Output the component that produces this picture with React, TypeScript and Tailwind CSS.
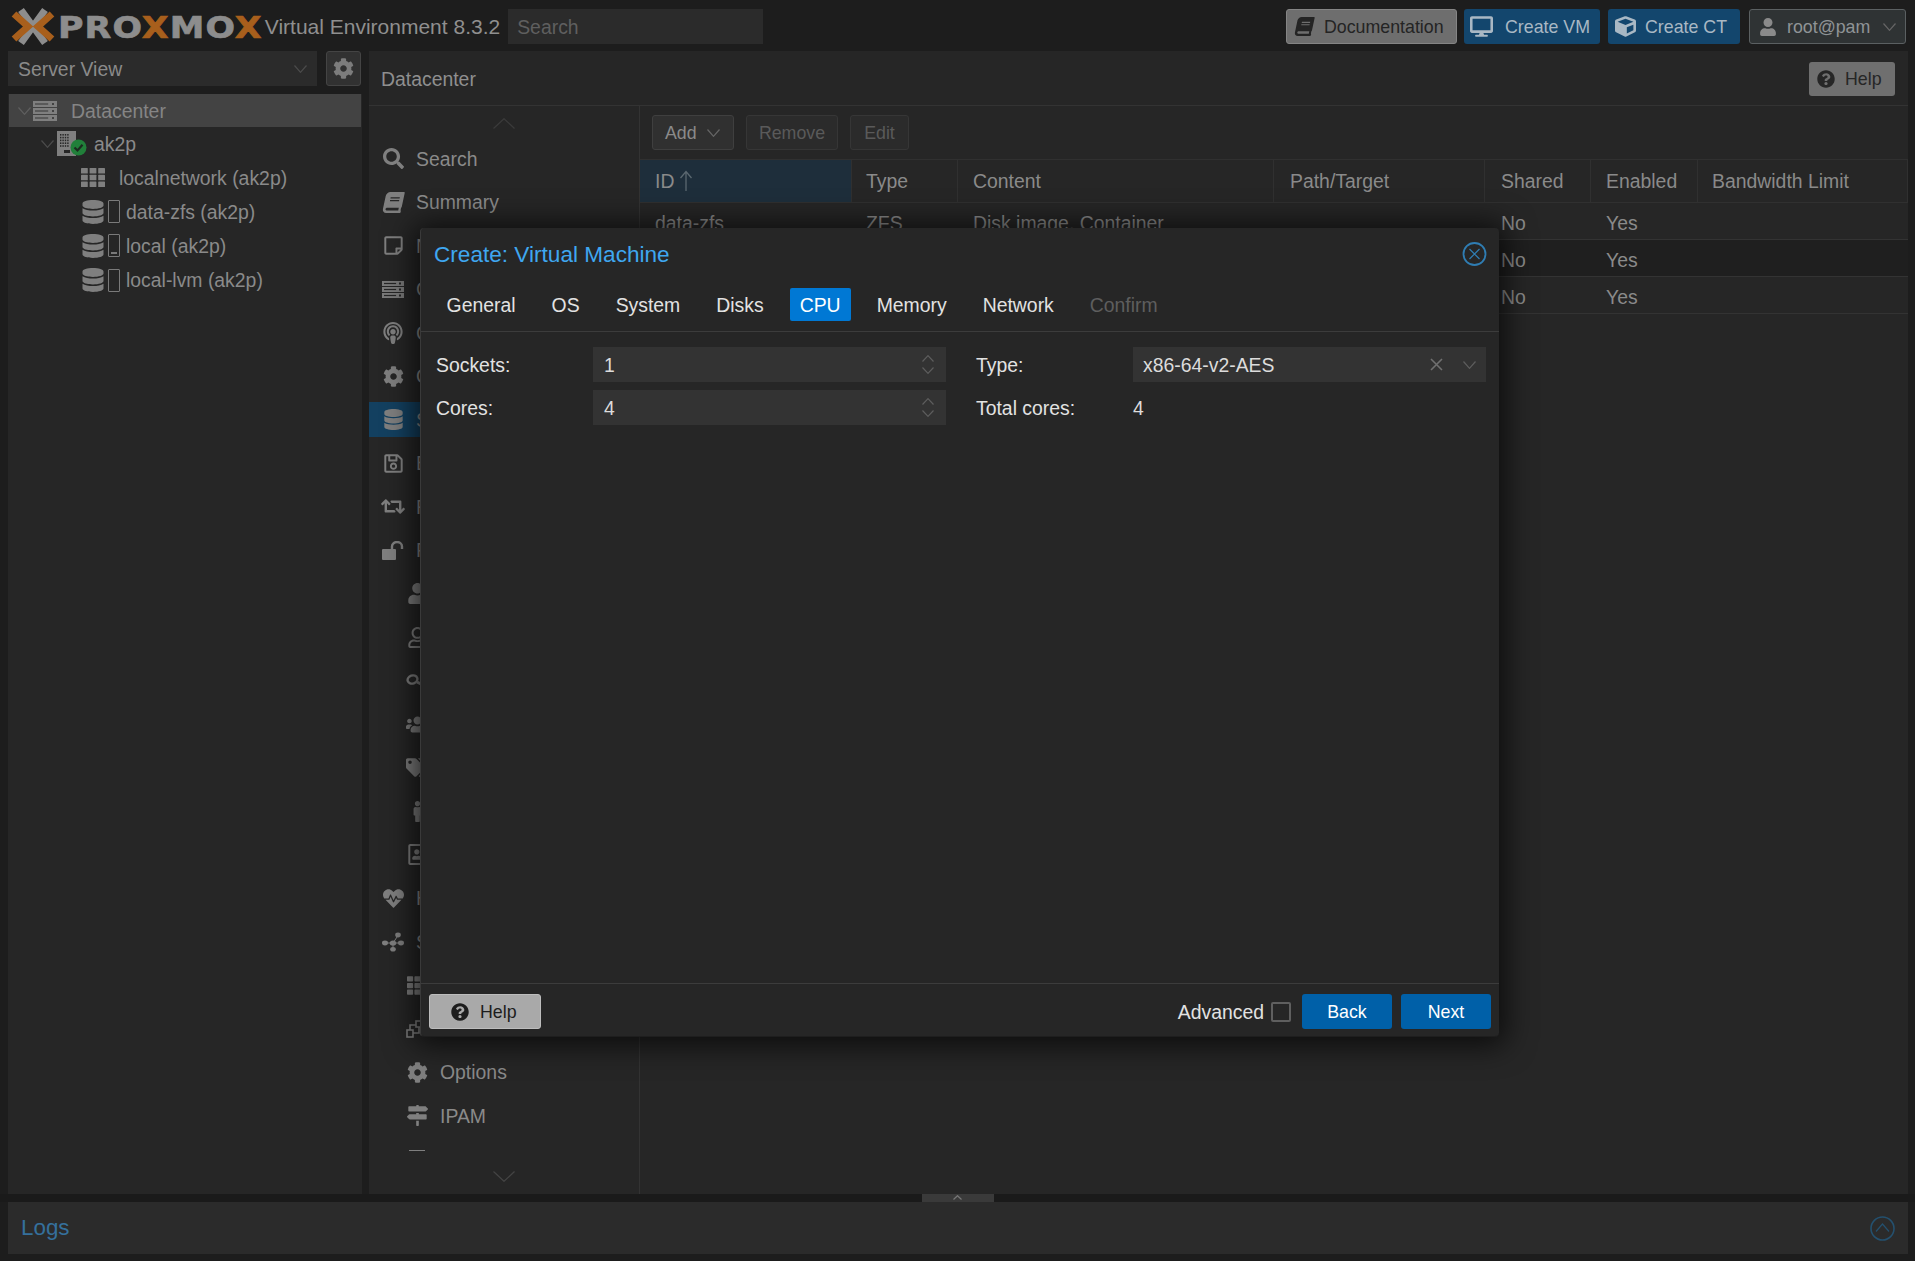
import React from "react";
import {
  FaSearch, FaBook, FaRegStickyNote, FaPodcast, FaCog, FaDatabase, FaRegSave, FaRetweet,
  FaUser, FaRegUser, FaUsers, FaTags, FaMale, FaRegAddressBook, FaHeartbeat, FaTh,
  FaMapSigns, FaQuestionCircle, FaDesktop, FaCube,
} from "react-icons/fa";

function Chev({ up = false, w = 14, h = 8, color = "#555", sw = 1.2 }: { up?: boolean; w?: number; h?: number; color?: string; sw?: number }) {
  return (
    <svg width={w} height={h} viewBox={`0 0 ${w} ${h}`} className="shrink-0">
      <polyline
        points={up ? `0.5,${h - 0.5} ${w / 2},0.7 ${w - 0.5},${h - 0.5}` : `0.5,0.5 ${w / 2},${h - 0.7} ${w - 0.5},0.5`}
        fill="none"
        stroke={color}
        strokeWidth={sw}
      />
    </svg>
  );
}

function LogoMark() {
  return (
    <svg width="46" height="40" viewBox="10 6 46 40" className="shrink-0">
      <g fill="none" strokeWidth="7">
        <path d="M21 9 L45 42 M45 9 L21 42" stroke="#8d8d8d" />
        <path d="M14 13 L28 25.5 L14 38" stroke="#a85f1c" strokeLinejoin="miter" />
        <path d="M52 13 L38 25.5 L52 38" stroke="#a85f1c" strokeLinejoin="miter" />
      </g>
    </svg>
  );
}

function Bars({ w, h, bg, cut }: { w: number; h: number; bg: string; cut: string }) {
  const bh = (h - 2) / 3;
  return (
    <svg width={w} height={h} viewBox={`0 0 ${w} ${h}`} className="shrink-0">
      {[0, 1, 2].map((i) => {
        const y = i * (bh + 1);
        return (
          <g key={i}>
            <rect x="0" y={y} width={w} height={bh} fill={bg} />
            <rect x="2" y={y + bh / 2 - 0.6} width={w * 0.55} height="1.2" fill={cut} />
            <rect x={w - 5} y={y + bh / 2 - 1} width="2" height="2" fill={cut} />
          </g>
        );
      })}
    </svg>
  );
}

function ClusterIcon(_: { className?: string }) {
  return <Bars w={22} h={17} bg="#7a7a7a" cut="#262626" />;
}

function UnlockIcon(_: { className?: string }) {
  return (
    <svg width="22" height="19" viewBox="0 0 22 19" className="shrink-0">
      <rect x="0" y="8" width="14" height="11" rx="1" fill="#7f7f7f" />
      <path d="M10 8 V5.5 A5 4.5 0 0 1 20 5.5 V8" fill="none" stroke="#7f7f7f" strokeWidth="2.4" />
    </svg>
  );
}

function KeyIcon(_: { className?: string }) {
  return (
    <svg width="22" height="16" viewBox="0 0 22 16" className="shrink-0">
      <ellipse cx="6.5" cy="6.5" rx="5" ry="4" fill="none" stroke="#7f7f7f" strokeWidth="2.4" transform="rotate(-20 6.5 6.5)" />
      <path d="M11 9 L21 14" fill="none" stroke="#7f7f7f" strokeWidth="3" />
    </svg>
  );
}

function SdnIcon(_: { className?: string }) {
  return (
    <svg width="22" height="20" viewBox="0 0 22 20" className="shrink-0">
      <g stroke="#7f7f7f" strokeWidth="1" fill="none">
        <path d="M3 11 H19 M11 11 L16 3.5 M11 11 V17" />
      </g>
      <g fill="#7f7f7f">
        <ellipse cx="3" cy="11" rx="3" ry="2.4" />
        <ellipse cx="11" cy="11" rx="3.2" ry="2.6" />
        <ellipse cx="19" cy="11" rx="3" ry="2.4" />
        <ellipse cx="16" cy="3" rx="2.8" ry="2.4" />
        <ellipse cx="11" cy="17.3" rx="2.8" ry="2.3" />
      </g>
    </svg>
  );
}

function VnetIcon(_: { className?: string }) {
  return (
    <svg width="22" height="18" viewBox="0 0 22 18" className="shrink-0">
      <g stroke="#7f7f7f" strokeWidth="1.6" fill="none">
        <rect x="1" y="10" width="6" height="7" />
        <rect x="10" y="1" width="6" height="6" />
        <path d="M4 10 V5 H10 M13 7 V13 H7" />
      </g>
    </svg>
  );
}

function ShieldTop(_: { className?: string }) {
  return (
    <svg width="16" height="22" viewBox="0 0 16 22" className="shrink-0">
      <path d="M0 2 H16 V11 C16 16 11 19 8 21 C5 19 0 16 0 11 Z" fill="#7f7f7f" />
    </svg>
  );
}

function NodeIcon() {
  const dots: React.ReactElement[] = [];
  for (let r = 0; r < 5; r++)
    for (let c = 0; c < 4; c++) dots.push(<rect key={`${r}-${c}`} x={3 + c * 2.4} y={3 + r * 2.8} width="1.4" height="1.6" fill="#262626" />);
  return (
    <span className="relative block w-[28px] h-[26px] shrink-0">
      <svg width="19" height="25" viewBox="0 0 19 25" className="block">
        <rect width="19" height="25" fill="#7f7f7f" />
        {dots}
        <rect x="7" y="19" width="6" height="3" fill="#262626" />
      </svg>
      <svg width="17" height="17" viewBox="0 0 17 17" className="absolute left-[12.5px] top-[8px]">
        <circle cx="8.5" cy="8.5" r="8" fill="#21803a" />
        <polyline points="4.5,8.5 7.5,11.5 12.5,5.8" fill="none" stroke="#1c2b20" strokeWidth="2.2" />
      </svg>
    </span>
  );
}

function StorageStatus({ dash = false }: { dash?: boolean }) {
  return (
    <span className="relative w-[12px] h-[23px] shrink-0 border border-[#7a7a7a] rounded-[1px] block">
      {dash && <span className="absolute left-[2px] right-[2px] bottom-[2px] h-[2px] bg-[#7a7a7a]" />}
    </span>
  );
}

function GridIcon() {
  return (
    <svg width="24" height="19" viewBox="0 0 24 19" className="shrink-0">
      {[0, 6.7, 13.4].map((y) => [0, 8.6, 17.2].map((x) => <rect key={`${x}-${y}`} x={x} y={y} width="6.8" height="5.6" rx="0.6" fill="#7f7f7f" />))}
    </svg>
  );
}

type NavItem = { icon: React.ComponentType<{ className?: string }>; label: string; size?: string; sub?: boolean; active?: boolean; skew?: boolean };

const navItems: NavItem[] = [
  { icon: FaSearch, label: "Search" },
  { icon: FaBook, label: "Summary", skew: true },
  { icon: FaRegStickyNote, label: "Notes" },
  { icon: ClusterIcon, label: "Cluster" },
  { icon: FaPodcast, label: "Ceph", size: "text-[22px]" },
  { icon: FaCog, label: "Options" },
  { icon: FaDatabase, label: "Storage", active: true },
  { icon: FaRegSave, label: "Backup" },
  { icon: FaRetweet, label: "Replication", size: "text-[25px]" },
  { icon: UnlockIcon, label: "Permissions" },
  { icon: FaUser, label: "", sub: true },
  { icon: FaRegUser, label: "", sub: true },
  { icon: KeyIcon, label: "", sub: true },
  { icon: FaUsers, label: "", sub: true, size: "text-[23px]" },
  { icon: FaTags, label: "", sub: true, size: "text-[23px]" },
  { icon: FaMale, label: "", sub: true },
  { icon: FaRegAddressBook, label: "", sub: true },
  { icon: FaHeartbeat, label: "HA" },
  { icon: SdnIcon, label: "SDN" },
  { icon: FaTh, label: "", sub: true },
  { icon: VnetIcon, label: "", sub: true },
  { icon: FaCog, label: "Options", sub: true },
  { icon: FaMapSigns, label: "IPAM", sub: true },
  { icon: ShieldTop, label: "", sub: true },
];

const columns = [
  { label: "ID", w: "w-[212px]", pl: "pl-[15px]", active: true },
  { label: "Type", w: "w-[106px]", pl: "pl-[14px]" },
  { label: "Content", w: "w-[316px]", pl: "pl-[15px]" },
  { label: "Path/Target", w: "w-[211px]", pl: "pl-[16px]" },
  { label: "Shared", w: "w-[106px]", pl: "pl-[16px]" },
  { label: "Enabled", w: "w-[107px]", pl: "pl-[15px]" },
  { label: "Bandwidth Limit", w: "flex-1", pl: "pl-[14px]" },
];

const rows = [
  ["data-zfs", "ZFS", "Disk image, Container", "", "No", "Yes", ""],
  ["", "", "", "", "No", "Yes", ""],
  ["", "", "", "", "No", "Yes", ""],
];

const tabs = ["General", "OS", "System", "Disks", "CPU", "Memory", "Network", "Confirm"];

function Spinner() {
  return (
    <span className="flex flex-col items-center gap-[5px] mr-[12px]">
      <Chev up w={12} h={7} color="#5e5e5e" />
      <Chev w={12} h={7} color="#5e5e5e" />
    </span>
  );
}

function NumberField({ value }: { value: string }) {
  return (
    <div className="w-[353px] h-[35px] bg-[#333333] flex items-center justify-between pl-[11px] text-[#dcdcdc]">
      <span>{value}</span>
      <Spinner />
    </div>
  );
}

export default function App() {
  return (
    <div className="relative w-full h-[1261px] overflow-hidden bg-[#1d1d1d] font-['Liberation_Sans',Arial,sans-serif] text-[19.4px] leading-[24px] text-[#8a8a8a]">
      {/* top bar */}
      <header className="h-[51px] flex items-center pr-[9px] pt-[2px]">
        <div className="pl-[10px] flex items-center">
          <LogoMark />
          <span className="ml-[2px] mr-[24px] inline-block origin-left scale-x-[1.12] font-['DejaVu_Sans',sans-serif] font-bold text-[31px] leading-[30px] tracking-[1px] [-webkit-text-stroke-width:0.7px] text-[#8d8d8d]">
            PRO<span className="text-[#a85f1c]">X</span>MO<span className="text-[#a85f1c]">X</span>
          </span>
        </div>
        <span className="whitespace-nowrap text-[21px] text-[#8f8f8f]">Virtual Environment 8.3.2</span>
        <div className="ml-[8px] w-[255px] h-[35px] bg-[#2b2b2b] flex items-center pl-[9px] text-[#5f5f5f]">Search</div>
        <div className="ml-auto flex items-center h-[35px] text-[17.8px]">
          <button className="w-[171px] h-full flex items-center gap-[10px] pl-[8px] rounded-[3px] border border-[#858585] bg-[#6e6e6e] text-[#242424]">
            <FaBook className="text-[19px] -skew-x-[12deg]" />
            Documentation
          </button>
          <button className="ml-[7px] w-[136px] h-full flex items-center gap-[12px] pl-[6px] rounded-[3px] bg-[#13466d] text-[#a9b8c4]">
            <FaDesktop className="text-[23px]" />
            Create VM
          </button>
          <button className="ml-[8px] w-[132px] h-full flex items-center gap-[9px] pl-[7px] rounded-[3px] bg-[#13466d] text-[#a9b8c4]">
            <FaCube className="text-[21px]" />
            Create CT
          </button>
          <button className="ml-[9px] w-[157px] h-full flex items-center pl-[9px] pr-[9px] rounded-[3px] border border-[#5b6062] bg-[#2f3334] text-[#8f9496]">
            <FaUser className="text-[18px] text-[#8a8a8a]" />
            <span className="ml-[10px]">root@pam</span>
            <span className="ml-auto">
              <Chev w={13} h={8} color="#666" />
            </span>
          </button>
        </div>
      </header>

      {/* body */}
      <div className="h-[1143px] flex pl-[8px] pr-[7px] gap-[7px]">
        {/* left */}
        <aside className="w-[354px] flex flex-col gap-[8px]">
          <div className="h-[35px] flex gap-[9px] pr-[1px]">
            <div className="flex-1 bg-[#2b2b2b] flex items-center justify-between pl-[10px] pr-[10px]">
              <span>Server View</span>
              <Chev w={13} h={8} color="#4c4c4c" />
            </div>
            <button className="w-[35px] flex items-center justify-center rounded-[3px] border border-[#444] bg-[#313131] text-[#7c7c7c]">
              <FaCog className="text-[21px]" />
            </button>
          </div>
          <div className="flex-1 bg-[#262626] pl-[1px] pr-[1px]">
            <div className="h-[33px] bg-[#434343] flex items-center pl-[9px]">
              <Chev w={13} h={8} color="#5f5f5f" />
              <span className="ml-[2px]"><Bars w={24} h={20} bg="#7f7f7f" cut="#434343" /></span>
              <span className="ml-[14px] text-[#858585]">Datacenter</span>
            </div>
            <div className="h-[33.5px] flex items-center pl-[32px]">
              <Chev w={13} h={8} color="#4c4c4c" />
              <span className="ml-[3px]"><NodeIcon /></span>
              <span className="ml-[9px]">ak2p</span>
            </div>
            <div className="h-[34px] flex items-center pl-[72px]">
              <GridIcon />
              <span className="ml-[14px]">localnetwork (ak2p)</span>
            </div>
            {[
              { t: "data-zfs (ak2p)", dash: false },
              { t: "local (ak2p)", dash: true },
              { t: "local-lvm (ak2p)", dash: false },
            ].map((s) => (
              <div key={s.t} className="h-[34.3px] flex items-center pl-[72px]">
                <FaDatabase className="text-[24px] text-[#7f7f7f]" />
                <span className="ml-[3px]"><StorageStatus dash={s.dash} /></span>
                <span className="ml-[6px]">{s.t}</span>
              </div>
            ))}
          </div>
        </aside>

        {/* main */}
        <main className="flex-1 bg-[#262626] flex flex-col min-w-0">
          <div className="h-[55px] shrink-0 border-b border-[#333] flex items-center justify-between pl-[12px] pr-[13px]">
            <span className="text-[#8f8f8f] mt-[1px]">Datacenter</span>
            <button className="w-[86px] h-[34px] mt-[1px] flex items-center gap-[10px] pl-[8px] rounded-[3px] bg-[#6f6f6f] text-[#262626] text-[17.8px]">
              <FaQuestionCircle className="text-[18px]" />
              Help
            </button>
          </div>
          <div className="flex-1 flex min-h-0">
            {/* nav */}
            <nav className="w-[271px] shrink-0 border-r border-[#333] flex flex-col">
              <div className="h-[31px] shrink-0 flex items-center justify-center pt-[4px]">
                <Chev up w={22} h={11} color="#3b3b3b" />
              </div>
              <div className="h-[1014px] overflow-hidden">
                {navItems.map((n, i) => {
                  const Icon = n.icon;
                  return (
                    <div key={i} className="h-[43.5px] flex items-center">
                      <div className={`h-[35px] w-full flex items-center ${n.active ? "bg-[#134060]" : ""} ${n.sub ? "pl-[36px]" : "pl-[12px]"}`}>
                        <span className="w-[24px] flex justify-center shrink-0 text-[#7f7f7f]">
                          <Icon className={`${n.size ?? "text-[21px]"} ${n.skew ? "-skew-x-[12deg]" : ""}`} />
                        </span>
                        {n.label && <span className="ml-[11px] whitespace-nowrap">{n.label}</span>}
                      </div>
                    </div>
                  );
                })}
              </div>
              <div className="flex-1 flex items-start justify-center pt-[20px]">
                <Chev w={22} h={11} color="#444" />
              </div>
            </nav>
            {/* right */}
            <div className="flex-1 min-w-0">
              <div className="h-[53px] flex items-center gap-[12px] pl-[12px]">
                <button className="w-[82px] h-[35px] flex items-center gap-[10px] pl-[12px] rounded-[3px] border border-[#3f3f3f] bg-[#303030] text-[17.8px]">
                  Add
                  <Chev w={13} h={8} color="#666" />
                </button>
                <button className="w-[92px] h-[35px] rounded-[3px] border border-[#363636] bg-[#2b2b2b] text-[#5a5a5a] text-[17.8px]">Remove</button>
                <button className="w-[59px] h-[35px] rounded-[3px] border border-[#363636] bg-[#2b2b2b] text-[#5a5a5a] text-[17.8px]">Edit</button>
              </div>
              <div className="h-[44px] flex border-y border-[#303030]">
                {columns.map((c) => (
                  <div key={c.label} className={`${c.w} ${c.pl} flex items-center border-r border-[#303030] ${c.active ? "bg-[#1e2e3b]" : ""}`}>
                    {c.label}
                    {c.active && (
                      <svg width="14" height="22" viewBox="0 0 14 22" className="ml-[5px]">
                        <path d="M7 21 V2 M1.5 8 L7 1.5 L12.5 8" fill="none" stroke="#5b6870" strokeWidth="1.3" />
                      </svg>
                    )}
                  </div>
                ))}
              </div>
              {rows.map((r, i) => (
                <div key={i} className={`h-[37px] flex border-b border-[#333] ${i === 1 ? "bg-[#1f1f1f]" : ""}`}>
                  {columns.map((c, j) => (
                    <div key={c.label} className={`${c.w} ${c.pl} flex items-center pt-[3px]`}>
                      {r[j]}
                    </div>
                  ))}
                </div>
              ))}
            </div>
          </div>
        </main>
      </div>

      {/* splitter */}
      <div className="h-[8px] flex justify-center bg-[#1a1a1a]">
        <div className="w-[72px] h-full bg-[#3a3a3a] flex justify-center pt-[1px]">
          <Chev up w={9} h={5} color="#777" />
        </div>
      </div>

      {/* logs */}
      <div className="ml-[8px] mr-[7px] h-[52px] bg-[#2b2b2b] flex items-center justify-between pl-[13px] pr-[13px]">
        <span className="text-[22.4px] text-[#35709c]">Logs</span>
        <svg width="25" height="25" viewBox="0 0 25 25">
          <circle cx="12.5" cy="12.5" r="11.5" fill="none" stroke="#24506e" strokeWidth="1.6" />
          <polyline points="6,15.5 12.5,8 19,15.5" fill="none" stroke="#24506e" strokeWidth="1.2" />
        </svg>
      </div>

      {/* dialog */}
      <section className="absolute left-[420px] top-[228px] w-[1079px] h-[809px] flex flex-col rounded-[4px] bg-[#262626] shadow-[0_2px_30px_6px_rgba(0,0,0,0.7)] border-l border-[#3a3a3a] border-b border-b-[#1e1e1e]">
        <div className="h-[50px] shrink-0 flex items-center justify-between pl-[13px] pr-[12px] pt-[3px]">
          <span className="text-[22.6px] text-[#3fa7f0]">Create: Virtual Machine</span>
          <svg width="25" height="26" viewBox="0 0 25 26" className="-mt-[1px]">
            <circle cx="12.5" cy="13" r="11" fill="none" stroke="#2f7db3" strokeWidth="1.8" />
            <path d="M7.5 8 L17.5 18 M17.5 8 L7.5 18" fill="none" stroke="#2f7db3" strokeWidth="1.2" />
          </svg>
        </div>
        <div className="h-[54px] shrink-0 flex items-start pl-[15.6px] gap-[16px] pt-[10px] border-b border-[#3c3c3c]">
          {tabs.map((t) => (
            <div
              key={t}
              className={`h-[33px] flex items-center px-[10px] rounded-[2px] ${t === "CPU" ? "bg-[#0078d4] text-white" : t === "Confirm" ? "text-[#5e5e5e]" : "text-[#e2e2e2]"}`}
            >
              {t}
            </div>
          ))}
        </div>
        <div className="flex-1 flex pt-[15px] pl-[15px] text-[#e2e2e2]">
          <div className="w-[540px] flex flex-col gap-[8px]">
            {[
              ["Sockets:", "1"],
              ["Cores:", "4"],
            ].map(([l, v]) => (
              <div key={l} className="flex items-center h-[35px]">
                <span className="w-[157px] shrink-0 mt-[1px]">{l}</span>
                <NumberField value={v} />
              </div>
            ))}
          </div>
          <div className="flex flex-col gap-[8px]">
            <div className="flex items-center h-[35px]">
              <span className="w-[157px] shrink-0 mt-[1px]">Type:</span>
              <div className="w-[353px] h-[35px] bg-[#333333] flex items-center pl-[10px] pr-[10px] text-[#dcdcdc]">
                <span className="flex-1">x86-64-v2-AES</span>
                <svg width="13" height="13" viewBox="0 0 13 13" className="mr-[20px]">
                  <path d="M1 1 L12 12 M12 1 L1 12" fill="none" stroke="#707070" strokeWidth="1.6" />
                </svg>
                <Chev w={13} h={8} color="#5e5e5e" />
              </div>
            </div>
            <div className="flex items-center h-[35px]">
              <span className="w-[157px] shrink-0 mt-[1px]">Total cores:</span>
              <span className="text-[#dcdcdc] mt-[1px]">4</span>
            </div>
          </div>
        </div>
        <div className="h-[53px] shrink-0 border-t border-[#3c3c3c] flex items-center pl-[8px] pr-[8px] pt-[3px] text-[#e2e2e2]">
          <button className="w-[112px] h-[35px] flex items-center gap-[11px] pl-[21px] rounded-[3px] border border-[#bdbdbd] bg-[#a9a9a9] text-[#1d1d1d] text-[17.8px]">
            <FaQuestionCircle className="text-[18px]" />
            Help
          </button>
          <span className="ml-auto">Advanced</span>
          <span className="ml-[7px] w-[20px] h-[20px] border-2 border-[#5f5f5f] rounded-[2px] block" />
          <button className="ml-[11px] w-[90px] h-[35px] rounded-[3px] bg-[#0060a8] text-white text-[17.8px]">Back</button>
          <button className="ml-[9px] w-[90px] h-[35px] rounded-[3px] bg-[#0060a8] text-white text-[17.8px]">Next</button>
        </div>
      </section>
    </div>
  );
}
